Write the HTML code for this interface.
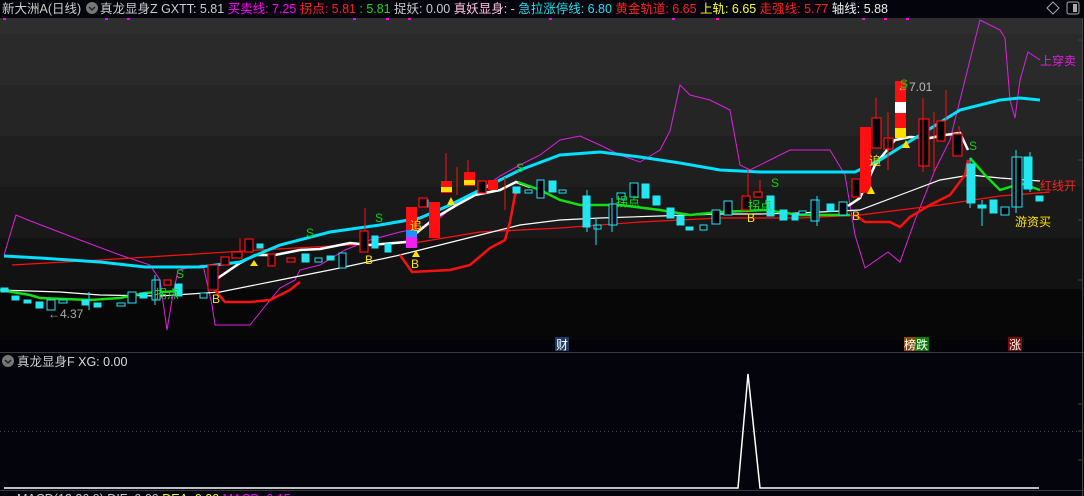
<!DOCTYPE html>
<html><head><meta charset="utf-8"><style>
body{margin:0;width:1084px;height:496px;overflow:hidden;background:#04040c;font-family:"Liberation Sans","Noto Sans CJK SC",sans-serif;}
svg{position:absolute;left:0;top:0}
</style></head><body>
<svg width="1084" height="496" xmlns="http://www.w3.org/2000/svg" font-family="Liberation Sans, Noto Sans CJK SC, sans-serif">
<rect width="1084" height="496" fill="#04040c"/>
<rect x="0" y="18" width="1082" height="16" fill="#2e2e2e"/>
<rect x="0" y="34" width="1082" height="51" fill="#2a2a2a"/>
<rect x="0" y="85" width="1082" height="51" fill="#252525"/>
<rect x="0" y="136" width="1082" height="51" fill="#1f1f1f"/>
<rect x="0" y="187" width="1082" height="51" fill="#191919"/>
<rect x="0" y="238" width="1082" height="51" fill="#121212"/>
<rect x="0" y="289" width="1082" height="51" fill="#070707"/>
<rect x="0" y="340" width="1082" height="12" fill="#020208"/>
<line x1="0" y1="352.5" x2="1084" y2="352.5" stroke="#3a3a3a"/>
<line x1="1082.5" y1="18" x2="1082.5" y2="496" stroke="#444"/>
<g stroke="#444"><line x1="1078" y1="40" x2="1082" y2="40"/><line x1="1078" y1="100" x2="1082" y2="100"/><line x1="1078" y1="160" x2="1082" y2="160"/><line x1="1078" y1="220" x2="1082" y2="220"/><line x1="1078" y1="280" x2="1082" y2="280"/><line x1="1078" y1="404" x2="1082" y2="404"/><line x1="1078" y1="431" x2="1082" y2="431"/><line x1="1078" y1="460" x2="1082" y2="460"/></g>
<g fill="#f0f"><rect x="3" y="18" width="3" height="2"/><rect x="105" y="18" width="3" height="2"/><rect x="127" y="18" width="3" height="2"/><rect x="353" y="18" width="3" height="2"/><rect x="386" y="18" width="3" height="2"/><rect x="408" y="18" width="3" height="2"/><rect x="549" y="18" width="3" height="2"/><rect x="672" y="18" width="3" height="2"/><rect x="716" y="18" width="3" height="2"/><rect x="862" y="18" width="3" height="2"/><rect x="884" y="18" width="3" height="2"/><rect x="906" y="18" width="3" height="2"/></g>

<polyline fill="none" stroke="#e020e0" stroke-width="1" points="4,255 16,215 28,220 80,240 120,255 150,265 160,280 167,330 172,300 178,270 203,265 212,305 215,325 250,325 262,310 280,288 295,280 300,270 320,265 345,250 370,240 400,232 420,228 440,218 460,200 480,190 500,176 520,165 540,155 560,140 580,136 600,145 620,155 640,162 660,150 670,131 680,85 690,95 710,100 730,110 740,165 750,170 770,160 790,150 830,150 845,175 855,235 865,268 888,252 900,262 915,220 935,170 950,140 960,100 970,60 980,20 1000,30 1005,38 1010,100 1015,118 1020,80 1028,52 1040,60"/>
<polyline fill="none" stroke="#ff1010" stroke-width="1.2" points="12,265 100,260 180,255 260,250 350,245 420,242 480,232 560,228 640,222 720,218 800,218 860,215 940,205 1000,196 1050,192"/>
<polyline fill="none" stroke="#fff" stroke-width="1.2" points="0,290 60,292 100,295 160,296 220,292 280,280 340,268 400,255 440,245 480,235 520,225 560,220 600,218 660,216 720,214 760,214 800,213 860,210 900,195 940,180 970,175 1000,178 1040,181"/>
<polyline fill="none" stroke="#fff" stroke-width="2.5" points="218,278 240,263 255,255 275,255 300,250 320,249 350,243 370,245 406,242 420,230 435,218 455,206 475,195 500,190 516,182 530,187"/>
<polyline fill="none" stroke="#fff" stroke-width="2.5" points="848,206 860,198 875,165 895,140 910,137 930,138 945,135 960,133 968,150"/>
<polyline fill="none" stroke="#00e0ff" stroke-width="3" points="4,256 40,258 100,262 145,267 200,267 240,262 280,245 330,232 380,225 420,218 450,205 480,190 520,170 560,155 600,152 640,157 680,163 720,170 760,172 800,172 855,172 880,160 920,135 960,110 1000,100 1020,98 1040,100"/>
<polyline fill="none" stroke="#ff1010" stroke-width="2.5" points="208,282 225,302 250,302 270,300 290,290 300,282"/>
<polyline fill="none" stroke="#ff1010" stroke-width="2.5" points="400,255 412,272 450,270 470,265 490,248 505,240 510,222 515,195 518,190"/>
<polyline fill="none" stroke="#ff1010" stroke-width="2.5" points="855,215 865,222 890,222 900,227 910,217 930,205 950,195 965,175 968,160"/>
<polyline fill="none" stroke="#10e010" stroke-width="2.5" points="0,290 30,295 40,298 90,300 120,298 145,293 180,291"/>
<polyline fill="none" stroke="#10e010" stroke-width="2.5" points="518,182 540,190 560,200 580,205 600,205 620,205 660,210 690,215 720,212 765,210 800,215 850,215"/>
<polyline fill="none" stroke="#10e010" stroke-width="2.5" points="970,158 985,175 1000,190 1010,187 1020,183 1040,190"/>

<g fill="#22e6f0" stroke="#22e6f0" stroke-width="1">
<rect x="1" y="288" width="7" height="4"/><rect x="12" y="296" width="7" height="4"/><rect x="24" y="300" width="7" height="3"/><rect x="36" y="302" width="7" height="6"/>
<rect x="82" y="300" width="7" height="5"/><rect x="94" y="303" width="7" height="4"/><rect x="140" y="293" width="7" height="5"/><rect x="175" y="284" width="7" height="12"/>
<rect x="257" y="244" width="6" height="4"/><rect x="302" y="254" width="7" height="8"/><rect x="327" y="256" width="7" height="4"/><rect x="372" y="236" width="6" height="12"/><rect x="385" y="244" width="6" height="8"/>
<rect x="422" y="200" width="6" height="7"/><rect x="513" y="187" width="7" height="6"/><rect x="549" y="181" width="7" height="11"/><rect x="583" y="196" width="7" height="31"/>
<rect x="642" y="184" width="7" height="14"/><rect x="653" y="196" width="7" height="9"/><rect x="667" y="208" width="7" height="10"/><rect x="677" y="216" width="7" height="9"/><rect x="686" y="227" width="7" height="3"/>
<rect x="767" y="196" width="7" height="20"/><rect x="780" y="210" width="7" height="10"/><rect x="792" y="214" width="6" height="6"/><rect x="827" y="204" width="7" height="7"/>
<rect x="874" y="119" width="7" height="28"/><rect x="955" y="134" width="6" height="21"/><rect x="967" y="164" width="8" height="39"/><rect x="978" y="205" width="8" height="3"/><rect x="990" y="200" width="7" height="13"/><rect x="1024" y="157" width="8" height="32"/><rect x="1036" y="196" width="7" height="5"/>
</g>
<g fill="#04040c" stroke="#22e6f0" stroke-width="1">
<rect x="47" y="300" width="8" height="10"/><rect x="59" y="300" width="8" height="3"/><rect x="117" y="303" width="8" height="3"/><rect x="128" y="292" width="8" height="11"/><rect x="152" y="280" width="8" height="20"/><rect x="200" y="293" width="7" height="5"/>
<rect x="315" y="258" width="7" height="4"/><rect x="339" y="253" width="7" height="15"/><rect x="525" y="190" width="7" height="3"/><rect x="537" y="180" width="7" height="18"/><rect x="559" y="190" width="7" height="3"/>
<rect x="594" y="225" width="7" height="4"/><rect x="609" y="204" width="8" height="21"/><rect x="617" y="193" width="8" height="6"/><rect x="630" y="183" width="8" height="14"/>
<rect x="700" y="225" width="7" height="5"/><rect x="712" y="210" width="8" height="14"/><rect x="724" y="201" width="8" height="14"/>
<rect x="799" y="211" width="7" height="3"/><rect x="811" y="200" width="8" height="21"/><rect x="839" y="202" width="8" height="13"/><rect x="1001" y="207" width="8" height="8"/><rect x="1012" y="157" width="10" height="50"/>
</g>
<g stroke="#22e6f0"><line x1="89" y1="292" x2="89" y2="310"/><line x1="155" y1="275" x2="155" y2="305"/><line x1="596" y1="218" x2="596" y2="245"/><line x1="587" y1="190" x2="587" y2="232"/><line x1="612" y1="198" x2="612" y2="232"/><line x1="970" y1="158" x2="970" y2="208"/><line x1="982" y1="200" x2="982" y2="226"/><line x1="1030" y1="152" x2="1030" y2="192"/><line x1="1016" y1="150" x2="1016" y2="213"/><line x1="817" y1="196" x2="817" y2="226"/></g>
<g fill="#04040c" stroke="#ff1010" stroke-width="1.2">
<rect x="164" y="280" width="7" height="5"/><rect x="208" y="265" width="10" height="25"/><rect x="221" y="257" width="8" height="8"/><rect x="232" y="252" width="10" height="6"/><rect x="245" y="239" width="8" height="13"/><rect x="268" y="254" width="7" height="12"/><rect x="287" y="258" width="8" height="4"/><rect x="360" y="231" width="8" height="21"/>
<rect x="419" y="198" width="8" height="9"/><rect x="478" y="181" width="8" height="12"/><rect x="742" y="196" width="8" height="14"/><rect x="754" y="192" width="8" height="5"/>
<rect x="852" y="179" width="8" height="18"/><rect x="872" y="118" width="9" height="30"/><rect x="884" y="138" width="9" height="11"/><rect x="919" y="119" width="10" height="47"/><rect x="937" y="121" width="8" height="20"/><rect x="953" y="134" width="9" height="22"/>
</g>
<g stroke="#ff1010"><line x1="240" y1="238" x2="240" y2="252"/><line x1="365" y1="208" x2="365" y2="231"/><line x1="446" y1="153" x2="446" y2="181"/><line x1="457" y1="167" x2="457" y2="195"/><line x1="468" y1="160" x2="468" y2="172"/><line x1="505" y1="177" x2="505" y2="210"/><line x1="748" y1="168" x2="748" y2="196"/><line x1="760" y1="180" x2="760" y2="192"/><line x1="876" y1="98" x2="876" y2="118"/><line x1="888" y1="112" x2="888" y2="170"/><line x1="923" y1="98" x2="923" y2="172"/><line x1="934" y1="112" x2="934" y2="172"/><line x1="946" y1="90" x2="946" y2="121"/><line x1="959" y1="126" x2="959" y2="134"/><line x1="862" y1="160" x2="862" y2="179"/></g>
<g fill="#ff1010">
<rect x="406" y="207" width="11" height="25"/><rect x="429" y="202" width="11" height="36"/><rect x="441" y="181" width="11" height="12"/><rect x="464" y="172" width="11" height="14"/><rect x="488" y="180" width="10" height="10"/><rect x="860" y="127" width="11" height="66"/><rect x="895" y="81" width="11" height="57"/>
</g>
<rect x="406" y="230" width="11" height="8" fill="#1e90ff"/><rect x="406" y="237" width="11" height="11" fill="#f020f0"/>
<rect x="441" y="187" width="11" height="5" fill="#ffe000"/><rect x="464" y="180" width="11" height="5" fill="#ffe000"/>
<rect x="895" y="102" width="11" height="11" fill="#fff"/><rect x="895" y="128" width="11" height="10" fill="#ffe000"/>
<g fill="#ffe000"><polygon points="451,197 455,205 447,205"/><polygon points="254,260 258,266 250,266"/><polygon points="416,250 420,257 412,257"/><polygon points="871,186 875,194 867,194"/><polygon points="906,140 910,148 902,148"/></g>
<g font-size="12">
<text x="48" y="318" fill="#aaa">←4.37</text>
<text x="897" y="91" fill="#bbb">←7.01</text>
<text x="1040" y="65" fill="#e020e0">上穿卖</text>
<text x="1015" y="226" fill="#ffe000">游资买</text>
<text x="1040" y="190" fill="#ff2020">红线开</text>
<text x="616" y="206" fill="#10e010">拐点</text>
<text x="748" y="210" fill="#10e010">拐点</text>
<text x="155" y="298" fill="#10e010">拐点</text>
<text x="410" y="230" fill="#ffe000">追</text>
<text x="869" y="165" fill="#ffe000">追</text>
<g fill="#10d010"><text x="176" y="278">S</text><text x="306" y="237">S</text><text x="375" y="222">S</text><text x="516" y="172">S</text><text x="771" y="187">S</text><text x="969" y="150">S</text><text x="900" y="88">S</text></g>
<g fill="#ffe000"><text x="212" y="303">B</text><text x="365" y="264">B</text><text x="411" y="268">B</text><text x="747" y="222">B</text><text x="852" y="220">B</text></g>
</g>
<rect x="555" y="337" width="14" height="14" fill="#1b3a66"/><text x="556" y="349" font-size="12" fill="#fff">财</text>
<rect x="904" y="337" width="12" height="14" fill="#8a4a00"/><rect x="916" y="337" width="13" height="14" fill="#0a7a0a"/><text x="904" y="349" font-size="12" fill="#fff">榜跌</text>
<rect x="1008" y="337" width="14" height="14" fill="#7a0a0a"/><text x="1009" y="349" font-size="12" fill="#fff">涨</text>

<g font-size="12.5">
<text x="2" y="13" fill="#ccc">新大洲A(日线)</text>
<text x="100" y="13" textLength="788" lengthAdjust="spacing"><tspan fill="#ccc">真龙显身Z  GXTT: 5.81  </tspan><tspan fill="#f0f">买卖线: 7.25  </tspan><tspan fill="#ff2020">拐点: 5.81  </tspan><tspan fill="#10e010">: 5.81  </tspan><tspan fill="#ccc">捉妖: 0.00  </tspan><tspan fill="#ffc0e0">真妖显身: -  </tspan><tspan fill="#20e0f0">急拉涨停线: 6.80  </tspan><tspan fill="#ff2020">黄金轨道: 6.65  </tspan><tspan fill="#ffff20">上轨: 6.65  </tspan><tspan fill="#ff2020">走强线: 5.77  </tspan><tspan fill="#eee">轴线: 5.88</tspan></text>
</g>
<circle cx="92" cy="8" r="6" fill="#777"/><path d="M89 7 L92 10 L95 7" stroke="#222" stroke-width="1.5" fill="none"/>
<path d="M1053 2 L1059 8 L1053 14 L1047 8 Z" stroke="#aaa" fill="none"/>
<rect x="1067" y="2" width="12" height="12" rx="2" stroke="#aaa" fill="none"/><rect x="1073" y="4" width="4" height="8" fill="#aaa"/>

<circle cx="8" cy="361" r="6" fill="#777"/><path d="M5 360 L8 363 L11 360" stroke="#222" stroke-width="1.5" fill="none"/>
<text x="17" y="366" font-size="12.5"><tspan fill="#ccc">真龙显身F  </tspan><tspan fill="#ddd">XG: 0.00</tspan></text>
<line x1="0" y1="431.5" x2="1080" y2="431.5" stroke="#444" stroke-dasharray="1,3"/>
<polyline fill="none" stroke="#fff" stroke-width="1.5" points="4,488 738,488 748,374 760,488 1039,488"/>
<line x1="0" y1="490.5" x2="1084" y2="490.5" stroke="#3a3a3a"/>
<text x="17" y="503" font-size="12.5"><tspan fill="#ccc">MACD(12,26,9) DIF: 0.00 </tspan><tspan fill="#ff0">DEA: 0.00 </tspan><tspan fill="#f0f">MACD: 0.15</tspan></text>
</svg>
</body></html>
